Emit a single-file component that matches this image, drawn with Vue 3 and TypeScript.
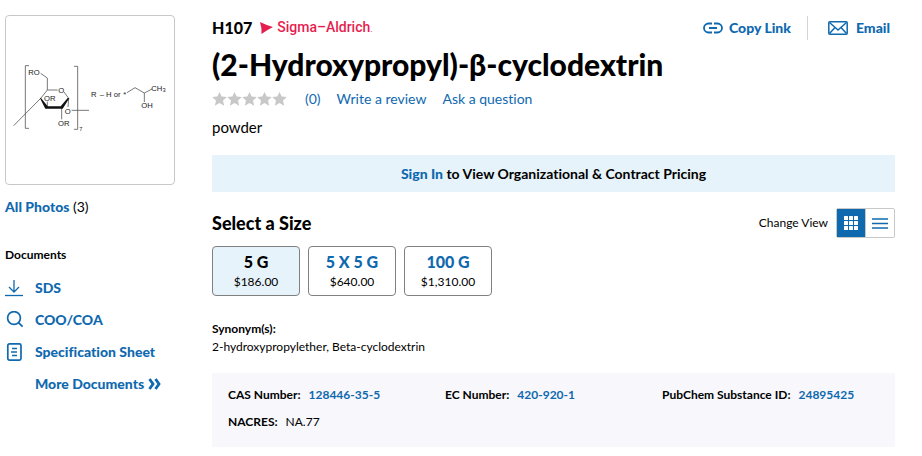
<script setup lang="ts">
import { ref } from 'vue'

interface PackSize {
  label: string
  price: string
}

interface Identifier {
  name: string
  value: string
  linked: boolean
}

const sizes: PackSize[] = [
  { label: '5 G', price: '$186.00' },
  { label: '5 X 5 G', price: '$640.00' },
  { label: '100 G', price: '$1,310.00' },
]

const identifiers: Identifier[] = [
  { name: 'CAS Number:', value: '128446-35-5', linked: true },
  { name: 'EC Number:', value: '420-920-1', linked: true },
  { name: 'PubChem Substance ID:', value: '24895425', linked: true },
  { name: 'NACRES:', value: 'NA.77', linked: false },
]

const selected = ref<string>('5 G')
const view = ref<'grid' | 'list'>('grid')
</script>

<template>
  <div class="page">
    <aside class="side">
      <a class="photo" href="#photos" aria-label="Product structure">
        <svg class="structure" viewBox="18 18 504 504" aria-hidden="true">
          <g fill="none" stroke="#555" stroke-width="2.4">
            <path d="M87 167H76V355H87M222 169H233V358H222" />
            <path d="M41 347L122 265L142 240H173M192 246L206 265L204 291M122 190L142 204V240M142 275V293M185 293V328M215 301H267" />
            <path d="M381 248L405 233L433 249L456 237M433 249V276" />
          </g>
          <path d="M120 265L136 296H188L208 265L203 264L182 289H143L123 264Z" fill="#111" />
          <g class="atoms">
            <text x="85" y="194">RO</text>
            <text x="175" y="249">O</text>
            <text x="132" y="274">OR</text>
            <text x="194" y="311">O</text>
            <text x="174" y="348">OR</text>
            <text x="238" y="364" class="sub">7</text>
            <text x="273" y="260">R</text>
            <text x="299" y="260">–</text>
            <text x="318" y="260">H or</text>
            <text x="370" y="260">*</text>
            <text x="454" y="243">CH<tspan class="sub" dy="4">3</tspan></text>
            <text x="424" y="295">OH</text>
          </g>
        </svg>
      </a>
      <p class="photos"><a class="strong" href="#photos">All Photos</a> (3)</p>
      <h2 class="docs-title">Documents</h2>
      <ul class="docs">
        <li>
          <a class="strong doc" href="#sds">
            <svg width="18" height="18" viewBox="0 0 18 18" fill="none" stroke="currentColor" aria-hidden="true">
              <path d="M9 1V13M4 8L9 13L14 8" stroke-width="1.3" />
              <path d="M0 16.5H18" stroke-width="1.3" />
            </svg>
            SDS
          </a>
        </li>
        <li>
          <a class="strong doc" href="#coa">
            <svg width="18" height="18" viewBox="0 0 18 18" fill="none" stroke="currentColor" stroke-width="1.7" aria-hidden="true">
              <circle cx="9" cy="7" r="6.4" />
              <path d="M13.4 11.6L17.6 15.6" />
            </svg>
            COO/COA
          </a>
        </li>
        <li>
          <a class="strong doc" href="#spec">
            <svg width="18" height="18" viewBox="0 0 18 18" fill="none" stroke="currentColor" stroke-width="1.7" aria-hidden="true">
              <rect x="2.8" y="0.9" width="13.2" height="16.2" rx="1.6" />
              <path d="M7 5.5H12M6 9H12M7 12.5H12" stroke-width="1.5" />
            </svg>
            Specification Sheet
          </a>
        </li>
        <li>
          <a class="strong doc more" href="#documents">
            More Documents
            <svg width="13" height="12" viewBox="0 0 13 12" fill="none" stroke="currentColor" stroke-width="2.8" aria-hidden="true">
              <path d="M1.5 1L5 6L1.5 11M7.5 1L11 6L7.5 11" />
            </svg>
          </a>
        </li>
      </ul>
    </aside>

    <main class="main">
      <header class="top">
        <span class="sku">H107</span>
        <a class="brand" href="#brand">
          <svg width="13" height="12" viewBox="0 0 13 12" aria-hidden="true">
            <path d="M0 0Q6 3 13 5Q7 8 1.5 12Q2 6 0 0Z" fill="#e61e50" />
          </svg>
          <span>Sigma–Aldrich<small>.</small></span>
        </a>
        <nav class="actions">
          <button type="button" class="strong action copy">
            <svg width="20" height="12" viewBox="0 0 20 12" fill="none" stroke="currentColor" stroke-width="1.8" aria-hidden="true">
              <path d="M9 1.5H5.5A4.5 4.5 0 0 0 5.5 10.5H9M11 1.5H14.5A4.5 4.5 0 0 1 14.5 10.5H11M6 6H14" />
            </svg>
            Copy Link
          </button>
          <button type="button" class="strong action email">
            <svg width="20" height="14" viewBox="0 0 20 14" fill="none" stroke="currentColor" stroke-width="1.5" aria-hidden="true">
              <rect x="0.8" y="0.8" width="18.4" height="12.4" rx="1" />
              <path d="M1.5 1.5L10 9L18.5 1.5M1.5 12.5L7 6.5M18.5 12.5L13 6.5" />
            </svg>
            Email
          </button>
        </nav>
      </header>

      <h1 class="title">(2-Hydroxypropyl)-β-cyclodextrin</h1>

      <div class="rating">
        <span class="stars" role="img" aria-label="No ratings">
          <svg v-for="n in 5" :key="n" width="15" height="14" viewBox="0 0 15 14" aria-hidden="true">
            <path d="M7.5 0L9.7 4.5L14.8 5L11 8.6L12.2 13.8L7.5 11.1L2.8 13.8L4 8.6L0.2 5L5.3 4.5Z" fill="#c8c8c8" />
          </svg>
        </span>
        <a class="count" href="#reviews">(0)</a>
        <a href="#write">Write a review</a>
        <a href="#ask">Ask a question</a>
      </div>

      <p class="form">powder</p>

      <p class="banner"><a class="strong" href="#signin">Sign In</a> to View Organizational &amp; Contract Pricing</p>

      <div class="size-head">
        <h2>Select a Size</h2>
        <span class="view-label">Change View</span>
        <div class="switch" role="group" aria-label="Change View">
          <button type="button" aria-label="Grid" :class="{ on: view === 'grid' }" @click="view = 'grid'">
            <svg width="14" height="14" viewBox="0 0 14 14" fill="currentColor" aria-hidden="true">
              <template v-for="r in 3" :key="r">
                <rect v-for="c in 3" :key="c" :x="(c - 1) * 5" :y="(r - 1) * 5" width="4" height="4" rx="0.5" />
              </template>
            </svg>
          </button>
          <button type="button" aria-label="List" :class="{ on: view === 'list' }" @click="view = 'list'">
            <svg width="16" height="11" viewBox="0 0 16 11" stroke="currentColor" stroke-width="1.5" aria-hidden="true">
              <path d="M0 1H16M0 5.5H16M0 10H16" />
            </svg>
          </button>
        </div>
      </div>

      <div class="sizes">
        <button
          v-for="s in sizes"
          :key="s.label"
          type="button"
          class="size"
          :class="{ chosen: selected === s.label }"
          :aria-pressed="selected === s.label"
          @click="selected = s.label"
        >
          <span class="amount">{{ s.label }}</span>
          <span class="price">{{ s.price }}</span>
        </button>
      </div>

      <section class="synonyms">
        <h3>Synonym(s):</h3>
        <p>2-hydroxypropylether, Beta-cyclodextrin</p>
      </section>

      <dl class="facts">
        <div v-for="i in identifiers" :key="i.name" class="fact">
          <dt>{{ i.name }}</dt>
          <dd><a v-if="i.linked" href="#search">{{ i.value }}</a><template v-else>{{ i.value }}</template></dd>
        </div>
      </dl>
    </main>
  </div>
</template>

<style>
body {
  margin: 0;
  background: #fff;
}
</style>

<style scoped>
.page {
  display: grid;
  grid-template-columns: 170px minmax(0, 1fr);
  column-gap: 37px;
  padding: 15px 27px 9px 5px;
  font-family: Lato, "Liberation Sans", sans-serif;
  font-size: 12px;
  line-height: 18px;
  font-variant-ligatures: none;
  color: #000;
}
h1, h2, h3, p, ul, dl, dd {
  margin: 0;
  padding: 0;
}
ul {
  list-style: none;
}
a {
  color: #0f69af;
  text-decoration: none;
}
button {
  font-family: inherit;
  cursor: pointer;
}
svg {
  display: block;
  flex: none;
}
.strong {
  color: #0f69af;
  font-size: 14px;
  font-weight: 900;
}
.photo {
  display: block;
  border: 1px solid #c8c8c8;
  border-radius: 4px;
}
.structure {
  width: 100%;
  height: auto;
}
.atoms {
  font-family: "Liberation Sans", sans-serif;
  font-size: 23px;
  fill: #222;
}
.sub {
  font-size: 17px;
}
.photos {
  margin-top: 13px;
  font-size: 14px;
}
.docs-title {
  margin-top: 30px;
  font-size: 12px;
  font-weight: 700;
}
.docs {
  display: grid;
  gap: 14px;
  margin-top: 15px;
}
.doc {
  display: flex;
  align-items: center;
  gap: 12px;
  white-space: nowrap;
}
.more {
  gap: 4px;
  padding-left: 30px;
}
.top {
  display: flex;
  align-items: center;
  height: 26px;
}
.sku {
  font-size: 16px;
  font-weight: 900;
}
.brand {
  display: flex;
  align-items: center;
  gap: 4px;
  margin-left: 8px;
  font-family: Roboto, sans-serif;
  font-size: 14px;
  line-height: 20px;
  font-weight: 500;
  color: #e61e50;
}
.brand small {
  font-size: 8px;
}
.actions {
  display: flex;
  margin-left: auto;
}
.action {
  display: flex;
  align-items: center;
  border: 0;
  background: none;
  line-height: 24px;
}
.copy {
  gap: 6px;
  padding: 0 16px 0 0;
}
.email {
  gap: 8px;
  padding: 0 5px 0 20px;
  border-left: 1px solid #d5d5d5;
}
.title {
  margin-top: 5px;
  font-size: 30px;
  line-height: 36px;
  font-weight: 900;
}
.rating {
  display: flex;
  align-items: center;
  gap: 16px;
  height: 20px;
  margin-top: 7px;
  font-size: 14px;
}
.stars {
  display: flex;
}
.count {
  margin-left: 2px;
}
.form {
  margin-top: 8px;
  font-size: 15px;
  line-height: 20px;
}
.banner {
  margin-top: 18px;
  padding: 9px;
  text-align: center;
  background: #e7f3fa;
  font-size: 14px;
  line-height: 19px;
  font-weight: 700;
}
.size-head {
  display: flex;
  align-items: center;
  margin-top: 16px;
}
.size-head h2 {
  margin-right: auto;
  font-size: 18px;
  line-height: 24px;
  font-weight: 900;
}
.view-label {
  margin-right: 8px;
}
.switch {
  display: flex;
  border: 1px solid #c8c8c8;
  border-radius: 2px;
}
.switch button {
  display: grid;
  place-items: center;
  width: 28px;
  height: 28px;
  padding: 0;
  border: 0;
  background: #fff;
  color: #0f69af;
}
.switch button + button {
  width: 29px;
  border-left: 1px solid #c8c8c8;
}
.switch .on {
  background: #0f69af;
  color: #fff;
}
.sizes {
  display: flex;
  gap: 8px;
  margin-top: 8px;
}
.size {
  display: flex;
  flex-direction: column;
  align-items: center;
  justify-content: center;
  width: 88px;
  height: 50px;
  padding: 0;
  border: 1px solid #808080;
  border-radius: 4px;
  background: #fff;
  color: #000;
}
.chosen {
  background: #e7f3fa;
}
.amount {
  color: #0f69af;
  font-size: 16px;
  line-height: 22px;
  font-weight: 900;
}
.chosen .amount {
  color: #000;
}
.price {
  font-size: 12px;
  line-height: 18px;
}
.synonyms {
  margin-top: 24px;
}
.synonyms h3 {
  font-size: 12px;
  font-weight: 700;
}
.facts {
  display: grid;
  grid-template-columns: repeat(3, minmax(0, 1fr));
  row-gap: 9px;
  margin-top: 17px;
  padding: 13px 16px 16px;
  background: #f7f7fc;
}
.fact {
  display: flex;
  gap: 8px;
  white-space: nowrap;
}
.fact dt,
.fact a {
  font-weight: 700;
}
</style>
